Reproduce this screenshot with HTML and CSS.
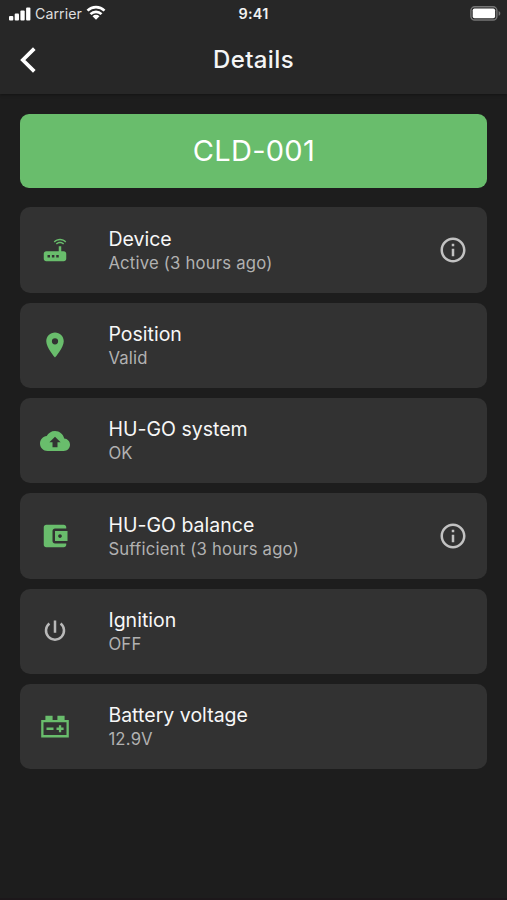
FILE: index.html
```html
<!DOCTYPE html>
<html lang="en">
<head>
<meta charset="utf-8">
<title>Details</title>
<link rel="stylesheet" href="styles.css">
</head>
<body>
<div class="screen">
  <header class="header">
    <div class="status">
      <div class="status-left">
        <svg class="signal" width="22" height="14" viewBox="0 0 22 14"><rect x="0" y="9" width="4.300" height="4.600" rx="1"/><rect x="5.700" y="6.500" width="4.300" height="7.100" rx="1"/><rect x="11.400" y="3.500" width="4.300" height="10.100" rx="1"/><rect x="17.100" y="0.400" width="4.300" height="13.200" rx="1"/></svg>
        <span class="carrier">Carrier</span>
        <svg class="wifi" width="20" height="15" viewBox="0 0 20 15"><path d="M1.500 5.600a12.200 12.200 0 0 1 17 0M4.500 9.100a7.800 7.800 0 0 1 11 0" fill="none" stroke="#fff" stroke-width="2.700"/><path d="M6.500 11.200a4.900 4.900 0 0 1 7 0L10 14.800z"/></svg>
      </div>
      <span class="time">9:41</span>
      <svg class="battery" width="31" height="15" viewBox="0 0 31 15"><rect x=".9" y=".8" width="26" height="13.200" rx="3.800" fill="none" stroke="#767676" stroke-width="1.400"/><rect x="2.700" y="2.500" width="22.400" height="9.800" rx="1.800"/><path d="M28.600 5v4.800c1-.4 1.700-1.300 1.700-2.400S29.600 5.400 28.600 5z" fill="#767676"/></svg>
    </div>
    <div class="nav">
      <svg class="back" width="18" height="26" viewBox="0 0 18 26"><path d="M14.300 1.600 2.800 13l11.500 11.400" fill="none" stroke="#fff" stroke-width="3.700"/></svg>
      <h1>Details</h1>
      <span class="nav-space"></span>
    </div>
  </header>
  <main class="content">
    <div class="banner"><span>CLD-001</span></div>
    <section class="card">
      <svg class="icon" viewBox="0 0 24 24"><path d="M20.2 5.900l.8-.8C19.600 3.700 17.800 3 16 3s-3.600.7-5 2.100l.8.8C13 4.800 14.500 4.200 16 4.200s3 .6 4.200 1.700zm-.9.8c-.9-.9-2.100-1.400-3.300-1.400s-2.400.5-3.300 1.400l.8.8c.7-.7 1.600-1 2.500-1s1.800.3 2.500 1l.8-.8zM19 13h-2V9h-2v4H5c-1.100 0-2 .9-2 2v4c0 1.100.9 2 2 2h14c1.100 0 2-.9 2-2v-4c0-1.100-.9-2-2-2zM8 18H6v-2h2v2zm3.500 0h-2v-2h2v2zm3.500 0h-2v-2h2v2z"/></svg>
      <div class="text"><h2>Device</h2><p>Active (3 hours ago)</p></div>
      <svg class="info" viewBox="0 0 24 24"><path d="M11 7h2v2h-2zm0 4h2v6h-2zm1-9C6.480 2 2 6.480 2 12s4.480 10 10 10 10-4.480 10-10S17.520 2 12 2zm0 18c-4.410 0-8-3.590-8-8s3.590-8 8-8 8 3.590 8 8-3.590 8-8 8z"/></svg>
    </section>
    <section class="card">
      <svg class="icon" viewBox="0 0 24 24"><path d="M12 2C8.130 2 5 5.130 5 9c0 5.250 7 13 7 13s7-7.750 7-13c0-3.870-3.130-7-7-7zm0 9.500a2.500 2.500 0 0 1 0-5 2.500 2.500 0 0 1 0 5z"/></svg>
      <div class="text"><h2>Position</h2><p>Valid</p></div>
    </section>
    <section class="card">
      <svg class="icon" viewBox="0 0 24 24"><path d="M19.350 10.040C18.670 6.590 15.640 4 12 4 9.110 4 6.600 5.640 5.350 8.040 2.340 8.360 0 10.910 0 14c0 3.310 2.690 6 6 6h13c2.760 0 5-2.240 5-5 0-2.640-2.050-4.780-4.650-4.960zM14 13v4h-4v-4H7.500L12 8.500l4.500 4.500H14z"/></svg>
      <div class="text"><h2>HU-GO system</h2><p>OK</p></div>
    </section>
    <section class="card">
      <svg class="icon" viewBox="0 0 24 24"><path d="M21 18v1c0 1.100-.9 2-2 2H5c-1.110 0-2-.9-2-2V5c0-1.100.89-2 2-2h14c1.100 0 2 .9 2 2v1h-9c-1.110 0-2 .9-2 2v8c0 1.100.89 2 2 2h9zm-9-2h10V8H12v8zm4-2.500c-.83 0-1.500-.67-1.500-1.500s.67-1.500 1.500-1.500 1.500.67 1.500 1.500-.67 1.500-1.500 1.500z"/></svg>
      <div class="text"><h2>HU-GO balance</h2><p>Sufficient (3 hours ago)</p></div>
      <svg class="info" viewBox="0 0 24 24"><path d="M11 7h2v2h-2zm0 4h2v6h-2zm1-9C6.480 2 2 6.480 2 12s4.480 10 10 10 10-4.480 10-10S17.520 2 12 2zm0 18c-4.410 0-8-3.590-8-8s3.590-8 8-8 8 3.590 8 8-3.590 8-8 8z"/></svg>
    </section>
    <section class="card">
      <svg class="icon power" viewBox="0 0 30 30"><path d="M15 4.400v12.300M9.400 7.600a9 9 0 1 0 11.200 0" fill="none" stroke="#b9b9b9" stroke-width="2.500"/></svg>
      <div class="text"><h2>Ignition</h2><p>OFF</p></div>
    </section>
    <section class="card">
      <svg class="icon" viewBox="0 0 30 30"><path fill-rule="evenodd" d="M1.200 8h4.200V3.800h7.200V8h4.800V3.800h7.200V8h4.200v17.400H1.200zM3.500 10.300v12.800h23V10.300z"/><path d="M6.500 15.600h7v2.300h-7zM18.900 13.200h2.300v2.400h2.400v2.300h-2.400v2.400h-2.300v-2.400h-2.400v-2.300h2.400z"/></svg>
      <div class="text"><h2>Battery voltage</h2><p>12.9V</p></div>
    </section>
  </main>
</div>
</body>
</html>
```

FILE: styles.css
```css
* { box-sizing: border-box; }
body { margin: 0; background: #1c1c1c; }
h1, h2, p { margin: 0; font-weight: 400; }
svg { display: block; fill: #fff; flex: none; }
.screen {
  width: 507px;
  height: 900px;
  background: #1d1d1d;
  border-bottom: 2px solid #1c171a;
  color: #fff;
  font-family: Inter, "Liberation Sans", sans-serif;
}
.header {
  height: 94px;
  background: #272727;
  box-shadow: 0 1px 3px rgba(0, 0, 0, .35);
}
.status {
  display: grid;
  grid-template-columns: 1fr auto 1fr;
  align-items: center;
  height: 27px;
  padding: 0 6px 0 9px;
}
.status-left { display: flex; align-items: center; }
.carrier { width: 47px; margin-left: 4px; font-size: 14.200px; letter-spacing: .05px; color: #dedede; white-space: nowrap; }
.wifi { margin-left: 4px; margin-top: -2px; }
.time { margin-left: -3px; font-size: 14.400px; font-weight: 600; letter-spacing: .3px; color: #f2f2f2; }
.battery { justify-self: end; }
.nav {
  display: flex;
  align-items: center;
  justify-content: space-between;
  height: 65px;
  padding: 0 20px;
}
.nav-space { width: 18px; }
.nav h1 { font-size: 24px; font-weight: 500; letter-spacing: .4px; color: #f5f5f5; }
.content { display: flex; flex-direction: column; gap: 10px; padding: 19.500px 19.600px 0 20.400px; }
.banner {
  display: flex;
  align-items: center;
  justify-content: center;
  height: 74.300px;
  margin-bottom: 9.700px;
  border-radius: 9px;
  background: #69bd6c;
  font-size: 29px;
  letter-spacing: .3px;
}
.card {
  display: flex;
  align-items: center;
  height: 85.300px;
  padding: 0 19.500px 0 19.600px;
  border-radius: 10px;
  background: #323232;
}
.icon { width: 30px; height: 30px; fill: #69bd6c; }
.text { flex: 1; margin-left: 38.400px; padding-top: 1.200px; }
.text h2 { font-size: 19.500px; line-height: 24px; letter-spacing: .02px; color: #f7f7f7; }
.text p { font-size: 16.700px; line-height: 24px; letter-spacing: .2px; color: #b1b1b1; }
.info { width: 30px; height: 30px; fill: #c2c2c2; }
```
